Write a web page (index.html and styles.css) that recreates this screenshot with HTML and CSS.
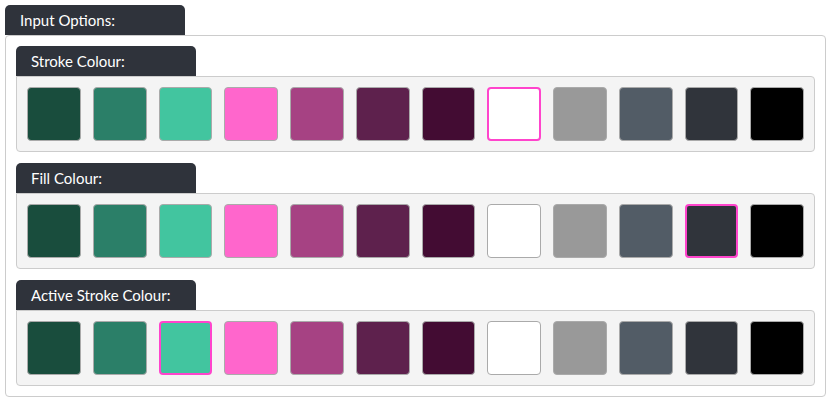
FILE: index.html
```html
<!DOCTYPE html>
<html>
<head>
<meta charset="utf-8">
<link rel="stylesheet" href="styles.css">
</head>
<body>
<div class="group">
  <div class="tab">Input Options:</div>
  <div class="panel">
    <div class="section">
      <div class="tab">Stroke Colour:</div>
      <div class="swatches">
        <div class="sw c1"></div><div class="sw c2"></div><div class="sw c3"></div><div class="sw c4"></div>
        <div class="sw c5"></div><div class="sw c6"></div><div class="sw c7"></div><div class="sw c8 sel"></div>
        <div class="sw c9"></div><div class="sw c10"></div><div class="sw c11"></div><div class="sw c12"></div>
      </div>
    </div>
    <div class="section">
      <div class="tab">Fill Colour:</div>
      <div class="swatches">
        <div class="sw c1"></div><div class="sw c2"></div><div class="sw c3"></div><div class="sw c4"></div>
        <div class="sw c5"></div><div class="sw c6"></div><div class="sw c7"></div><div class="sw c8"></div>
        <div class="sw c9"></div><div class="sw c10"></div><div class="sw c11 sel"></div><div class="sw c12"></div>
      </div>
    </div>
    <div class="section">
      <div class="tab">Active Stroke Colour:</div>
      <div class="swatches">
        <div class="sw c1"></div><div class="sw c2"></div><div class="sw c3 sel"></div><div class="sw c4"></div>
        <div class="sw c5"></div><div class="sw c6"></div><div class="sw c7"></div><div class="sw c8"></div>
        <div class="sw c9"></div><div class="sw c10"></div><div class="sw c11"></div><div class="sw c12"></div>
      </div>
    </div>
  </div>
</div>
</body>
</html>
```
FILE: styles.css
```css
html, body { margin: 0; padding: 0; background: #ffffff; }
body { padding: 5px; font-family: Lato, "Liberation Sans", sans-serif; }
.group { display: flex; flex-direction: column; }
.tab {
  width: 180px;
  height: 30px;
  box-sizing: border-box;
  padding-left: 15px;
  background: #2f333b;
  color: #ffffff;
  font-size: 15px;
  line-height: 30px;
  border-radius: 5px 5px 0 0;
}
.panel {
  border: 1px solid #cccccc;
  border-radius: 4px;
  padding: 10px;
  display: flex;
  flex-direction: column;
  gap: 11px;
}
.section { display: flex; flex-direction: column; }
.swatches {
  display: flex;
  gap: 12px;
  padding: 10px;
  background: #f4f4f4;
  border: 1px solid #cccccc;
  border-radius: 0 4px 4px 4px;
}
.sw {
  width: 54px;
  height: 54px;
  box-sizing: border-box;
  border: 1px solid #aaaaaa;
  border-radius: 4px;
}
.sw.sel { border: 2px solid #ff44cc; }
.c1 { background: #194d3d; }
.c2 { background: #2b7f68; }
.c3 { background: #42c59f; }
.c4 { background: #ff66cc; }
.c5 { background: #a64283; }
.c6 { background: #5e214d; }
.c7 { background: #430c33; }
.c8 { background: #ffffff; }
.c9 { background: #999999; }
.c10 { background: #525c66; }
.c11 { background: #30343b; }
.c12 { background: #000000; }
```
